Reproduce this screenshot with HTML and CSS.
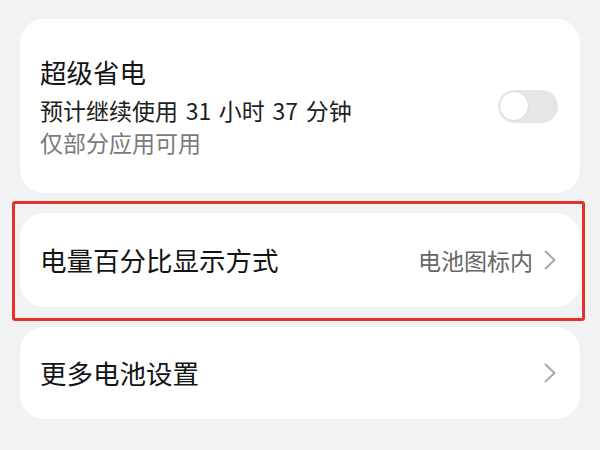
FILE: index.html
```html
<!DOCTYPE html>
<html lang="zh-CN">
<head>
<meta charset="utf-8">
<link rel="stylesheet" href="styles.css">
</head>
<body>
<div class="page">
  <div class="card card-saver">
    <div class="saver-text">
      <div class="title">超级省电</div>
      <div class="sub spaced">预计继续使用 31 小时 37 分钟</div>
      <div class="sub muted">仅部分应用可用</div>
    </div>
    <div class="toggle"><div class="knob"></div></div>
  </div>
  <div class="highlight-wrap">
    <div class="card card-row card-percent">
      <div class="title">电量百分比显示方式</div>
      <div class="row-end">
        <span class="value">电池图标内</span>
        <svg class="chev" width="12" height="20" viewBox="0 0 12 20"><polyline points="1.5,1.5 10.5,10 1.5,18.5" fill="none" stroke="#a9a9a9" stroke-width="2" stroke-linecap="round" stroke-linejoin="round"/></svg>
      </div>
    </div>
    <div class="highlight"></div>
  </div>
  <div class="card card-row card-more">
    <div class="title">更多电池设置</div>
    <div class="row-end">
      <svg class="chev" width="12" height="20" viewBox="0 0 12 20"><polyline points="1.5,1.5 10.5,10 1.5,18.5" fill="none" stroke="#a9a9a9" stroke-width="2" stroke-linecap="round" stroke-linejoin="round"/></svg>
    </div>
  </div>
</div>
</body>
</html>
```
FILE: styles.css
```css
html, body {
  margin: 0;
  padding: 0;
  background: #f1f2f4;
}
body {
  width: 600px;
  height: 450px;
  overflow: hidden;
  font-family: "Noto Sans CJK SC", "Noto Sans", sans-serif;
  color: #1a1a1a;
}
.page {
  display: flex;
  flex-direction: column;
  gap: 20px;
  padding: 19px 20px 0 20px;
}
.card {
  background: #ffffff;
  border-radius: 24px;
  box-sizing: border-box;
}
.card-saver {
  height: 174px;
  display: flex;
  align-items: center;
  justify-content: space-between;
  padding: 0 22px 0 20px;
}
.saver-text {
  display: flex;
  flex-direction: column;
}
.title {
  font-size: 26.5px;
  line-height: 36px;
  font-weight: 400;
  color: #141414;
}
.saver-text .title {
  margin-bottom: 4px;
}
.sub {
  font-size: 23px;
  line-height: 32px;
  color: #202020;
}
.sub.spaced {
  word-spacing: 2.5px;
}
.sub.muted {
  color: #7a7a7a;
}
.toggle {
  width: 60px;
  height: 33px;
  border-radius: 17px;
  background: #e6e6e6;
  display: flex;
  align-items: center;
  padding: 0 1px;
  box-sizing: border-box;
}
.knob {
  width: 30px;
  height: 30px;
  border-radius: 50%;
  background: #ffffff;
  border: 1.5px solid #dcdcdc;
  box-sizing: border-box;
}
.highlight-wrap {
  position: relative;
}
.card-row {
  display: flex;
  align-items: center;
  justify-content: space-between;
  padding: 0 24px 0 20px;
}
.card-percent {
  height: 94px;
}
.card-more {
  height: 92px;
}
.row-end {
  display: flex;
  align-items: center;
  gap: 11px;
}
.value {
  font-size: 23px;
  line-height: 30px;
  color: #666666;
}
.chev {
  display: block;
}
.highlight {
  position: absolute;
  left: -8px;
  top: -12px;
  right: -5px;
  bottom: -14px;
  border: 3px solid #e8302a;
  border-radius: 3px;
  pointer-events: none;
}
```
